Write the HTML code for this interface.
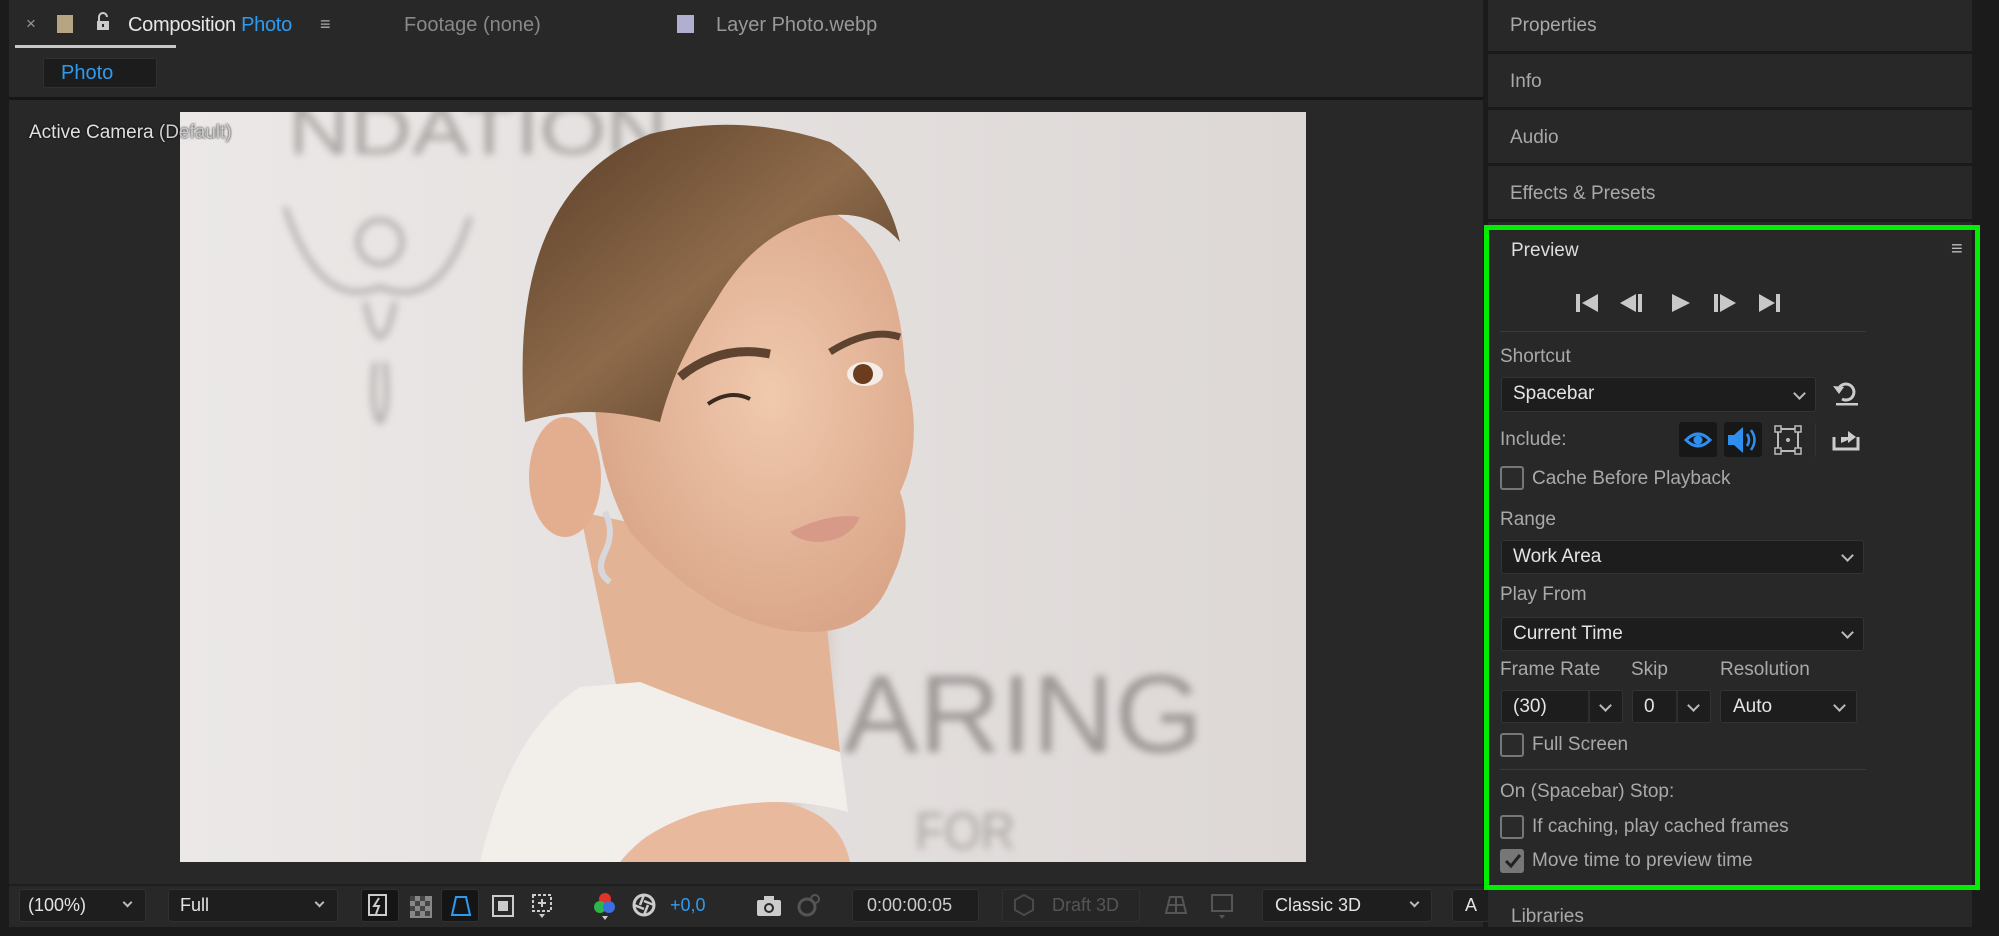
<!DOCTYPE html>
<html><head><meta charset="utf-8"><style>
*{margin:0;padding:0;box-sizing:border-box}
body{width:1999px;height:936px;overflow:hidden;background:#1b1b1b;font-family:"Liberation Sans",sans-serif;position:relative}
.a{position:absolute;white-space:nowrap}
.lbl{color:#a9a9a9;font-size:19px}
.val{color:#e4e4e4;font-size:19px}
.dd{position:absolute;background:#1d1d1d;border:1px solid #333;border-radius:3px}
.chev{position:absolute;width:9px;height:9px;border-right:2px solid #bbb;border-bottom:2px solid #bbb;transform:rotate(45deg)}
.cb{position:absolute;width:24px;height:24px;border:2px solid #777;border-radius:3px;background:#2a2a2a}
.tb{position:absolute;top:889px;height:33px;background:#1e1e1e;border-radius:3px;border:1px solid #303030}
</style></head><body>
<div class="a" style="left:9px;top:0;width:1474px;height:927px;background:#282828"></div>
<div class="a" style="left:9px;top:97px;width:1474px;height:3px;background:#161616"></div>
<div class="a" style="left:26px;top:14px;color:#999;font-size:17px">×</div>
<div class="a" style="left:57px;top:15px;width:16px;height:18px;background:#b6a582"></div>
<svg class="a" style="left:95px;top:12px" width="16" height="20" viewBox="0 0 16 20"><path d="M4 9V5a4 4 0 0 1 8 0" fill="none" stroke="#ccc" stroke-width="2"/><rect x="2" y="9" width="12" height="9" fill="#ccc"/><rect x="7" y="12" width="2" height="3" fill="#282828"/></svg>
<div class="a" style="left:128px;top:14px;color:#e6e6e6;font-size:20px;letter-spacing:-0.3px">Composition <span style="color:#2f9bf0">Photo</span></div>
<div class="a" style="left:320px;top:14px;color:#aaa;font-size:18px">≡</div>
<div class="a" style="left:15px;top:45px;width:161px;height:3px;background:#c8c8c8"></div>
<div class="a" style="left:404px;top:14px;color:#888;font-size:20px">Footage (none)</div>
<div class="a" style="left:677px;top:15px;width:17px;height:18px;background:#b0afd0"></div>
<div class="a" style="left:716px;top:14px;color:#999;font-size:20px">Layer Photo.webp</div>
<div class="a" style="left:43px;top:58px;width:114px;height:30px;background:#1c1c1c;border-radius:3px;border:1px solid #303030"></div>
<div class="a" style="left:61px;top:62px;color:#2f9bf0;font-size:20px">Photo</div>

<svg class="a" style="left:180px;top:112px" width="1126" height="750" viewBox="0 0 1126 750">
<defs>
<linearGradient id="bg" x1="0" x2="1"><stop offset="0" stop-color="#ebe8e7"/><stop offset="1" stop-color="#ddd8d6"/></linearGradient>
<radialGradient id="sk" cx="0.55" cy="0.45" r="0.6"><stop offset="0" stop-color="#f0c9ad"/><stop offset="1" stop-color="#d9a487"/></radialGradient>
<linearGradient id="hr" x1="0" x2="1" y1="0" y2="1"><stop offset="0" stop-color="#5a3e28"/><stop offset="0.5" stop-color="#8d6a4a"/><stop offset="1" stop-color="#4a3322"/></linearGradient>
<filter id="bl"><feGaussianBlur stdDeviation="4"/></filter>
<filter id="bl2"><feGaussianBlur stdDeviation="8"/></filter>
</defs>
<rect width="1126" height="750" fill="url(#bg)"/>
<g filter="url(#bl)" font-family="Liberation Sans">
<text x="108" y="42" font-size="70" textLength="380" lengthAdjust="spacingAndGlyphs" fill="#a9a5a3">NDATION</text>
<text x="663" y="640" font-size="110" textLength="360" lengthAdjust="spacingAndGlyphs" fill="#9d9896">ARING</text>
<text x="735" y="737" font-size="52" textLength="100" lengthAdjust="spacingAndGlyphs" fill="#aaa6a4">FOR</text>
<path d="M105 95 Q140 200 200 175 Q260 200 290 105 M185 190 Q200 260 215 190 M195 250 Q190 300 200 310 Q210 300 205 250" fill="none" stroke="#a29e9c" stroke-width="4"/>
<circle cx="200" cy="130" r="22" fill="none" stroke="#a29e9c" stroke-width="4"/>
</g>
<ellipse cx="560" cy="540" rx="90" ry="200" fill="#c9ac9c" opacity="0.5" filter="url(#bl2)"/>
<path d="M400 400 L640 450 L660 640 L450 640 Z" fill="#e2b395"/>
<path d="M440 750 Q500 680 600 690 Q660 700 670 750Z" fill="#e8b99c"/>
<path d="M300 750 Q330 620 400 575 L460 570 Q560 610 660 640 L668 700 Q600 680 520 700 Q460 720 440 750Z" fill="#f2efea"/>
<path d="M420 200 Q480 90 630 90 Q720 120 725 260 Q745 330 720 380 Q735 420 710 470 Q690 520 630 520 Q540 520 450 420 Q400 330 420 200Z" fill="url(#sk)"/>
<ellipse cx="385" cy="365" rx="36" ry="60" fill="#e3ad90"/>
<path d="M345 310 Q325 80 470 22 Q560 0 650 30 Q705 65 720 130 Q690 95 640 105 Q575 120 535 190 Q495 250 480 310 Q440 300 410 300 Q380 300 345 310Z" fill="url(#hr)"/>
<path d="M500 265 Q540 232 590 242" stroke="#5d4330" stroke-width="9" fill="none"/>
<path d="M650 240 Q690 215 720 225" stroke="#5d4330" stroke-width="7" fill="none"/>
<path d="M528 292 Q550 277 570 287" stroke="#3a2a20" stroke-width="4" fill="none"/>
<ellipse cx="685" cy="262" rx="18" ry="12" fill="#f4ece6"/>
<circle cx="683" cy="262" r="10" fill="#6b3d1e"/>
<path d="M610 420 Q650 400 680 405 Q670 428 640 430 Q620 430 610 420Z" fill="#d89a88"/>
<path d="M425 400 Q435 420 425 440 Q415 460 430 470" stroke="#d8d8dc" stroke-width="6" fill="none"/>
</svg>
<div class="a" style="left:29px;top:122px;color:#e0e0e0;font-size:19px;text-shadow:0 0 2px #000">Active Camera <span style="color:#ccc">(Default)</span></div>

<div class="a" style="left:9px;top:884px;width:1474px;height:2px;background:#1e1e1e"></div>
<div class="tb" style="left:19px;width:127px"></div><div class="a val" style="left:28px;top:895px;font-size:18px">(100%)</div><div class="chev" style="left:124px;top:899px;width:7px;height:7px"></div>
<div class="tb" style="left:168px;width:170px"></div><div class="a val" style="left:180px;top:895px;font-size:18px">Full</div><div class="chev" style="left:316px;top:899px;width:7px;height:7px"></div>
<div class="tb" style="left:361px;width:38px;background:#151515"></div>
<svg class="a" style="left:368px;top:894px" width="20" height="24"><rect x="1" y="1" width="17" height="20" fill="none" stroke="#ccc" stroke-width="2"/><path d="M11 4L6 12h5l-3 8" stroke="#ccc" stroke-width="2" fill="none"/></svg>
<svg class="a" style="left:410px;top:896px" width="22" height="22"><rect width="22" height="22" fill="#888"/><rect width="5" height="5" x="0" y="0" fill="#444"/><rect width="5" height="5" x="10" y="0" fill="#444"/><rect width="5" height="5" x="5" y="5" fill="#444"/><rect width="5" height="5" x="15" y="5" fill="#444"/><rect width="5" height="5" x="0" y="10" fill="#444"/><rect width="5" height="5" x="10" y="10" fill="#444"/><rect width="5" height="5" x="5" y="15" fill="#444"/><rect width="5" height="5" x="15" y="15" fill="#444"/></svg>
<div class="tb" style="left:441px;width:38px;background:#151515"></div>
<svg class="a" style="left:449px;top:894px" width="24" height="24"><path d="M7 3h10l4 18H3z" fill="none" stroke="#2f9bf0" stroke-width="2"/></svg>
<svg class="a" style="left:492px;top:894px" width="22" height="24"><rect x="1" y="2" width="20" height="20" fill="none" stroke="#ccc" stroke-width="2"/><rect x="6" y="7" width="10" height="10" fill="#ccc"/></svg>
<svg class="a" style="left:530px;top:892px" width="24" height="28"><rect x="3" y="3" width="18" height="16" fill="none" stroke="#ccc" stroke-width="2" stroke-dasharray="3 2"/><path d="M12 7v8M8 11h8" stroke="#ccc" stroke-width="2"/><path d="M9 22h6l-3 4z" fill="#ccc"/></svg>
<svg class="a" style="left:592px;top:892px" width="26" height="30"><circle cx="13" cy="7" r="6" fill="#e0332a"/><circle cx="8" cy="15" r="6" fill="#2bb54a"/><circle cx="17" cy="15" r="6" fill="#3a6fe0"/><path d="M10 24h6l-3 4z" fill="#ccc"/></svg>
<svg class="a" style="left:632px;top:893px" width="24" height="24"><circle cx="12" cy="12" r="10" fill="none" stroke="#ccc" stroke-width="3"/><path d="M12 2L8 12M22 12L12 8M12 22L16 12M2 12L12 16" stroke="#ccc" stroke-width="2.5"/></svg>
<div class="a" style="left:670px;top:895px;color:#2f9bf0;font-size:18px">+0,0</div>
<svg class="a" style="left:757px;top:896px" width="24" height="20"><rect x="0" y="4" width="24" height="16" rx="2" fill="#ccc"/><rect x="7" y="0" width="10" height="6" fill="#ccc"/><circle cx="12" cy="12" r="5" fill="#282828"/><circle cx="12" cy="12" r="3" fill="#ccc"/></svg>
<svg class="a" style="left:797px;top:893px" width="24" height="24"><circle cx="10" cy="14" r="8" fill="none" stroke="#555" stroke-width="3"/><circle cx="18" cy="6" r="4" fill="none" stroke="#555" stroke-width="2"/></svg>
<div class="tb" style="left:852px;width:127px"></div><div class="a val" style="left:867px;top:895px;font-size:18px;color:#ccc">0:00:00:05</div>
<div class="tb" style="left:1002px;width:138px;background:#262626"></div>
<svg class="a" style="left:1012px;top:893px" width="24" height="26"><path d="M12 2l9 5v10l-9 5-9-5V7z" fill="none" stroke="#4a4a4a" stroke-width="2"/></svg>
<div class="a" style="left:1052px;top:895px;color:#555;font-size:18px">Draft 3D</div>
<svg class="a" style="left:1165px;top:895px" width="22" height="20"><path d="M5 2h12l4 16H1z M3 10h16 M11 2v16" fill="none" stroke="#555" stroke-width="2"/></svg>
<svg class="a" style="left:1210px;top:893px" width="24" height="28"><rect x="2" y="2" width="20" height="16" fill="none" stroke="#555" stroke-width="2"/><path d="M9 22h6l-3 4z" fill="#555"/></svg>
<div class="tb" style="left:1262px;width:170px"></div><div class="a val" style="left:1275px;top:895px;font-size:18px">Classic 3D</div><div class="chev" style="left:1411px;top:899px;width:7px;height:7px"></div>
<div class="tb" style="left:1452px;width:40px"></div><div class="a val" style="left:1465px;top:895px;font-size:18px">A</div>

<div class="a" style="left:1488px;top:0;width:484px;height:927px;background:#282828"></div>
<div class="a" style="left:1488px;top:51px;width:484px;height:3px;background:#1a1a1a"></div>
<div class="a" style="left:1488px;top:107px;width:484px;height:3px;background:#1a1a1a"></div>
<div class="a" style="left:1488px;top:163px;width:484px;height:3px;background:#1a1a1a"></div>
<div class="a" style="left:1488px;top:219px;width:484px;height:3px;background:#1a1a1a"></div>
<div class="a lbl" style="left:1510px;top:15px">Properties</div>
<div class="a lbl" style="left:1510px;top:71px">Info</div>
<div class="a lbl" style="left:1510px;top:127px">Audio</div>
<div class="a lbl" style="left:1510px;top:183px">Effects &amp; Presets</div>
<div class="a" style="left:1484px;top:225px;width:496px;height:665px;border:5px solid #00ee00"></div>
<div class="a" style="left:1511px;top:240px;color:#ddd;font-size:19px">Preview</div>
<div class="a" style="left:1951px;top:238px;color:#bbb;font-size:20px">≡</div>
<svg class="a" style="left:1574px;top:292px" width="210" height="22" fill="#c8c8c8">
<rect x="2" y="2" width="4" height="18"/><path d="M24 2v18L8 11z"/>
<path d="M62 2v18L46 11z"/><rect x="64" y="2" width="4" height="18"/>
<path d="M98 2v18l18-9z"/>
<rect x="140" y="2" width="4" height="18"/><path d="M146 2v18l16-9z"/>
<path d="M185 2v18l16-9z"/><rect x="202" y="2" width="4" height="18"/>
</svg>
<div class="a" style="left:1500px;top:331px;width:366px;height:1px;background:#3a3a3a"></div>
<div class="a lbl" style="left:1500px;top:346px">Shortcut</div>
<div class="dd" style="left:1501px;top:377px;width:315px;height:35px"></div>
<div class="a val" style="left:1513px;top:383px">Spacebar</div><div class="chev" style="left:1795px;top:389px"></div>
<svg class="a" style="left:1832px;top:381px" width="28" height="26"><path d="M6 10a8 8 0 1 1 4 8" fill="none" stroke="#ccc" stroke-width="3"/><path d="M1 5l6 8 5-7z" fill="#ccc"/><rect x="4" y="22" width="22" height="2.5" fill="#ccc"/></svg>
<div class="a lbl" style="left:1500px;top:429px">Include:</div>
<div class="a" style="left:1679px;top:422px;width:38px;height:35px;background:#171717;border-radius:3px"></div>
<svg class="a" style="left:1684px;top:430px" width="28" height="20"><path d="M2 10Q14 -2 26 10Q14 22 2 10Z" fill="none" stroke="#2f8ff0" stroke-width="3"/><circle cx="14" cy="10" r="4.5" fill="#2f8ff0"/></svg>
<div class="a" style="left:1724px;top:422px;width:38px;height:35px;background:#171717;border-radius:3px"></div>
<svg class="a" style="left:1726px;top:425px" width="34" height="30"><path d="M2 10h6l9-8v26l-9-8H2z" fill="#2f8ff0"/><path d="M21 9q4 6 0 12M25 5q7 10 0 20" fill="none" stroke="#2f8ff0" stroke-width="2.5"/></svg>
<svg class="a" style="left:1774px;top:425px" width="28" height="30"><rect x="4" y="4" width="20" height="22" fill="none" stroke="#bbb" stroke-width="2"/><rect x="1" y="1" width="6" height="6" fill="#282828" stroke="#bbb" stroke-width="1.5"/><rect x="21" y="1" width="6" height="6" fill="#282828" stroke="#bbb" stroke-width="1.5"/><rect x="1" y="23" width="6" height="6" fill="#282828" stroke="#bbb" stroke-width="1.5"/><rect x="21" y="23" width="6" height="6" fill="#282828" stroke="#bbb" stroke-width="1.5"/><circle cx="14" cy="15" r="2" fill="#bbb"/></svg>
<div class="a" style="left:1815px;top:423px;width:1px;height:34px;background:#333"></div>
<svg class="a" style="left:1832px;top:427px" width="28" height="24"><path d="M2 10v12h24v-12" fill="none" stroke="#ccc" stroke-width="3"/><path d="M9 16v-6h7v-6l8 6-8 6v-3z" fill="#ccc"/></svg>
<div class="cb" style="left:1500px;top:466px"></div>
<div class="a lbl" style="left:1532px;top:468px">Cache Before Playback</div>
<div class="a lbl" style="left:1500px;top:509px">Range</div>
<div class="dd" style="left:1501px;top:540px;width:363px;height:34px"></div>
<div class="a val" style="left:1513px;top:546px">Work Area</div><div class="chev" style="left:1843px;top:551px"></div>
<div class="a lbl" style="left:1500px;top:584px">Play From</div>
<div class="dd" style="left:1501px;top:617px;width:363px;height:34px"></div>
<div class="a val" style="left:1513px;top:623px">Current Time</div><div class="chev" style="left:1843px;top:628px"></div>
<div class="a lbl" style="left:1500px;top:659px">Frame Rate</div>
<div class="a lbl" style="left:1631px;top:659px">Skip</div>
<div class="a lbl" style="left:1720px;top:659px">Resolution</div>
<div class="dd" style="left:1501px;top:690px;width:122px;height:33px"></div><div class="a" style="left:1588px;top:691px;width:2px;height:31px;background:#2e2e2e"></div>
<div class="a val" style="left:1513px;top:696px">(30)</div><div class="chev" style="left:1601px;top:701px"></div>
<div class="dd" style="left:1632px;top:690px;width:79px;height:33px"></div><div class="a" style="left:1676px;top:691px;width:2px;height:31px;background:#2e2e2e"></div>
<div class="a val" style="left:1644px;top:696px">0</div><div class="chev" style="left:1689px;top:701px"></div>
<div class="dd" style="left:1720px;top:690px;width:137px;height:33px"></div>
<div class="a val" style="left:1733px;top:696px">Auto</div><div class="chev" style="left:1835px;top:701px"></div>
<div class="cb" style="left:1500px;top:733px"></div>
<div class="a lbl" style="left:1532px;top:734px">Full Screen</div>
<div class="a" style="left:1500px;top:769px;width:366px;height:1px;background:#3a3a3a"></div>
<div class="a lbl" style="left:1500px;top:781px">On (Spacebar) Stop:</div>
<div class="cb" style="left:1500px;top:815px"></div>
<div class="a lbl" style="left:1532px;top:816px">If caching, play cached frames</div>
<div class="cb" style="left:1500px;top:849px;background:#777;border-color:#777"></div>
<svg class="a" style="left:1503px;top:852px" width="20" height="18"><path d="M3 9l5 5 9-11" fill="none" stroke="#222" stroke-width="3"/></svg>
<div class="a lbl" style="left:1532px;top:850px">Move time to preview time</div>
<div class="a lbl" style="left:1511px;top:906px">Libraries</div>
<div class="a" style="left:0;top:0;width:9px;height:936px;background:#1b1b1b"></div>
</body></html>
